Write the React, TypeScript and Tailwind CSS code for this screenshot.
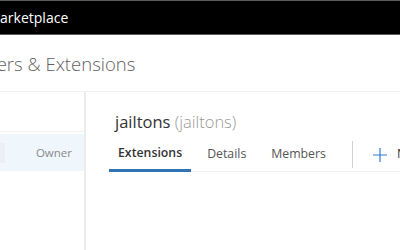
import React from "react";

export default function App() {
  const font = { fontFamily: '"Open Sans", "Noto Sans", sans-serif' };
  return (
    <div className="w-[400px] h-[250px] overflow-hidden bg-white relative" style={font}>
      <div className="h-[35px] bg-black border-t border-b border-[#5a5a5a] flex items-center">
        <span className="text-white text-[14px] leading-none -ml-[12.5px] whitespace-nowrap">Marketplace</span>
      </div>
      <div className="h-[57px] border-b border-[#f0f0f0] flex items-center">
        <span className="text-[18.5px] font-light text-[#605e5c] whitespace-nowrap -ml-[64px] pt-[2px]">Publishers &amp; Extensions</span>
      </div>
      <div className="flex h-[160px]">
        <div className="w-[86px] border-r-2 border-[#ececec] shrink-0 pt-[39px]">
          <div className="border-t border-[#f3f3f3] pt-[2px]">
            <div className="h-[37px] bg-[#eff6fc] flex items-center">
              <div className="w-[5px] h-[20px] bg-[#eaf0f4]" />
              <span className="ml-auto mr-[12px] text-[11.5px] text-[#8a8a8a]">Owner</span>
            </div>
          </div>
        </div>
        <div className="flex-1 pl-[23px] pt-[18px]">
          <div className="pl-[6px] text-[16.5px] leading-[24px] whitespace-nowrap">
            <span className="text-[#333]">jailtons</span>{" "}
            <span className="text-[#9a9a9a] font-light">(jailtons)</span>
          </div>
          <div className="flex items-stretch h-[34px] mt-[4px] border-b border-[#f0f0f0] whitespace-nowrap">
            <div className="px-[9px] flex items-center border-b-[3px] border-[#2f73b2] -mb-[1px]">
              <span className="text-[12.3px] font-semibold text-[#333]">Extensions</span>
            </div>
            <div className="px-[16px] flex items-center">
              <span className="text-[12.3px] text-[#555]">Details</span>
            </div>
            <div className="px-[9px] flex items-center">
              <span className="text-[12.3px] text-[#555]">Members</span>
            </div>
            <div className="ml-[17px] my-[3px] w-px bg-[#d0d0d0]" />
            <div className="pl-[20px] flex items-center gap-[10px]">
              <svg width="14" height="14" viewBox="0 0 14 14">
                <path d="M7 0v14M0 7h14" stroke="#2f7bd1" strokeWidth="1.2" />
              </svg>
              <span className="text-[12.3px] text-[#333]">New</span>
            </div>
          </div>
        </div>
      </div>
    </div>
  );
}
